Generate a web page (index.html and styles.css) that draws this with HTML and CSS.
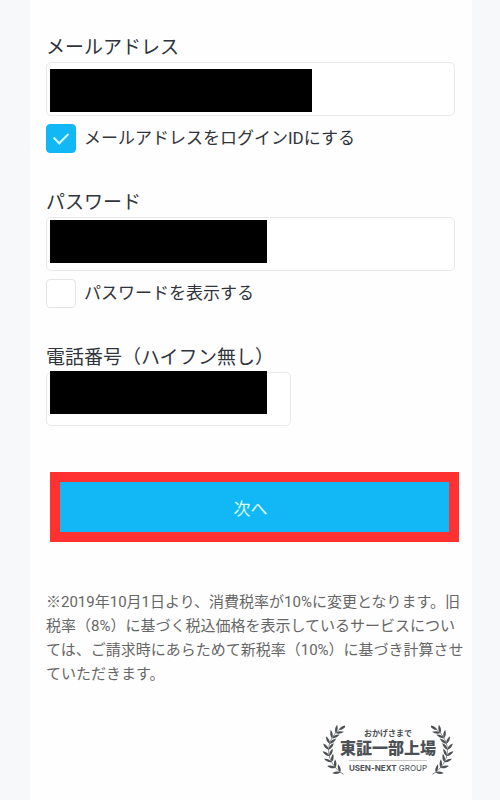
FILE: index.html
```
<!DOCTYPE html>
<html lang="ja">

<head>
    <meta charset="UTF-8">
    <meta name="viewport" content="width=device-width, initial-scale=1.0">
    <title>お客様情報の入力</title>
    <link rel="stylesheet" href="styles.css">
</head>

<body>
    <main class="card">
        <form>
            <div class="group">
                <label class="label" for="email">メールアドレス</label>
                <div class="field">
                    <input id="email" class="input" type="email">
                    <span class="mask mask-email"></span>
                </div>
                <label class="check">
                    <input type="checkbox" checked>
                    メールアドレスをログインIDにする
                </label>
            </div>
            <div class="group">
                <label class="label" for="password">パスワード</label>
                <div class="field">
                    <input id="password" class="input" type="password">
                    <span class="mask mask-password"></span>
                </div>
                <label class="check">
                    <input type="checkbox">
                    パスワードを表示する
                </label>
            </div>
            <div class="group">
                <label class="label" for="tel">電話番号（ハイフン無し）</label>
                <div class="field">
                    <input id="tel" class="input input-tel" type="tel">
                    <span class="mask mask-tel"></span>
                </div>
            </div>
            <button type="button" class="next">次へ</button>
        </form>
        <p class="note">※2019年10月1日より、消費税率が10%に変更となります。旧<br>税率（8%）に基づく税込価格を表示しているサービスについ<br>ては、ご請求時にあらためて新税率（10%）に基づき計算させ<br>ていただきます。</p>
        <div class="emblem">
            <svg class="laurel" viewBox="0 0 72 150" aria-hidden="true">
                <defs>
                    <path id="leaf" d="M0 0C5-6 5-16 0-25C-5-16-5-6 0 0Z" />
                    <g id="branch">
                        <path d="M60 10C16 40 6 100 58 142L68 148" fill="none" stroke="currentColor" stroke-width="2" />
                        <use href="#leaf" transform="translate(54 14) rotate(60)" />
                        <use href="#leaf" transform="translate(44 24) rotate(10)" />
                        <use href="#leaf" transform="translate(44 24) rotate(82)" />
                        <use href="#leaf" transform="translate(33 39) rotate(-8)" />
                        <use href="#leaf" transform="translate(33 39) rotate(66)" />
                        <use href="#leaf" transform="translate(26 56) rotate(-26)" />
                        <use href="#leaf" transform="translate(26 56) rotate(52)" />
                        <use href="#leaf" transform="translate(23 74) rotate(-42)" />
                        <use href="#leaf" transform="translate(23 74) rotate(38)" />
                        <use href="#leaf" transform="translate(25 93) rotate(-55)" />
                        <use href="#leaf" transform="translate(25 93) rotate(24)" />
                        <use href="#leaf" transform="translate(32 111) rotate(-67)" />
                        <use href="#leaf" transform="translate(32 111) rotate(10)" />
                        <use href="#leaf" transform="translate(43 128) rotate(-78)" />
                        <use href="#leaf" transform="translate(43 128) rotate(-2)" />
                        <use href="#leaf" transform="translate(58 142) rotate(-95)" />
                        <use href="#leaf" transform="translate(58 142) rotate(-16)" />
                    </g>
                </defs>
                <use href="#branch" />
            </svg>
            <div class="emblem-text">
                <span class="emblem-lead">おかげさまで</span>
                <strong class="emblem-title">東証一部上場</strong>
                <span class="emblem-group"><b>USEN-NEXT</b> GROUP</span>
            </div>
            <svg class="laurel laurel-right" viewBox="0 0 72 150" aria-hidden="true">
                <use href="#branch" />
            </svg>
        </div>
    </main>
</body>

</html>
```
FILE: styles.css
```
* {
    box-sizing: border-box;
}

body {
    margin: 0;
    background-color: #f6f8fa;
    color: #30343c;
    font-family: Roboto, "Noto Sans CJK JP", sans-serif;
}

.card {
    min-height: 100vh;
    margin: 0 28px 0 30px;
    padding: 36px 17px 24px 16px;
    background-color: #fefefe;
}

form {
    margin-bottom: 48px;
}

.group {
    margin-bottom: 38px;
}

.label {
    display: block;
    margin-bottom: 2px;
    font-size: 19px;
    line-height: 24px;
}

.field {
    position: relative;
}

.input {
    display: block;
    width: 100%;
    height: 54px;
    padding: 0 12px;
    border: 1px solid #e8e9eb;
    border-radius: 5px;
    background-color: #fff;
    font-size: 17px;
}

.input-tel {
    width: 60%;
}

/* black bars over the private values */
.mask {
    position: absolute;
    left: 4px;
    height: 43px;
    background-color: #000;
}

.mask-email {
    top: 7px;
    width: 262px;
}

.mask-password {
    top: 3px;
    width: 217px;
}

.mask-tel {
    top: -1px;
    width: 217px;
}

.check {
    display: flex;
    align-items: center;
    gap: 8px;
    margin-top: 8px;
    font-size: 17px;
    line-height: 29px;
}

.check input {
    appearance: none;
    display: grid;
    place-items: center;
    width: 30px;
    height: 29px;
    margin: 0;
    border: 1px solid #e2e4e6;
    border-radius: 4px;
    background-color: #fff;
}

.check input:checked {
    border-color: #12b7f5;
    background-color: #12b7f5;
}

.check input:checked::before {
    content: "";
    width: 12px;
    height: 7px;
    margin-bottom: 4px;
    border-left: 2px solid #d8faff;
    border-bottom: 2px solid #d8faff;
    transform: rotate(-45deg);
}

.next {
    display: block;
    width: 100%;
    height: 70px;
    margin: 46px 0 0 4px;
    padding: 0 8px 0 0;
    border: 10px solid #ff3131;
    background-color: #12b7f5;
    color: #d8faff;
    font-family: inherit;
    font-size: 17px;
    cursor: pointer;
}

.note {
    margin: 0;
    color: #666;
    font-size: 15px;
    line-height: 24px;
    white-space: nowrap;
}

.emblem {
    display: flex;
    justify-content: flex-end;
    margin-top: 39px;
    color: #4c5054;
}

.laurel {
    width: 24px;
    height: 50px;
    fill: currentColor;
}

.laurel-right {
    transform: scaleX(-1);
}

.emblem-text {
    display: flex;
    flex-direction: column;
    align-items: center;
    margin: 0 -5px;
    padding-top: 4px;
}

.emblem-lead {
    font-size: 8px;
    font-weight: bold;
    line-height: 10px;
}

.emblem-title {
    font-size: 16px;
    font-weight: 900;
    line-height: 19px;
}

.emblem-group {
    margin-top: 2px;
    padding-top: 2px;
    border-top: 1px solid #c8c8c8;
    font-family: Inter, sans-serif;
    font-size: 8px;
    line-height: 10px;
}
```
